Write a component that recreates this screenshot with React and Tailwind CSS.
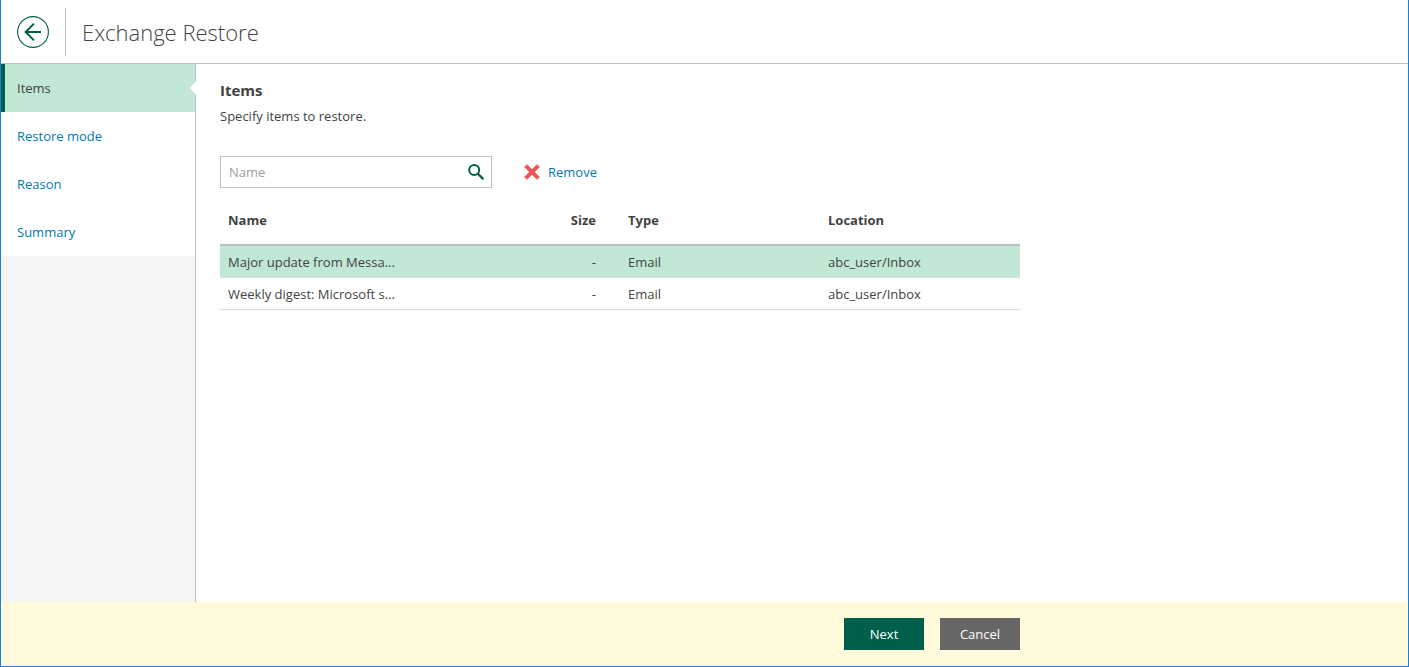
const steps = ["Items", "Restore mode", "Reason", "Summary"];

const rows = [
  { name: "Major update from Messa...", size: "-", type: "Email", location: "abc_user/Inbox", selected: true },
  { name: "Weekly digest: Microsoft s...", size: "-", type: "Email", location: "abc_user/Inbox", selected: false },
];

const Header = () => {
  return (
    <header className="flex h-16 items-center border-b border-[#bfbfbf] pl-4">
      <button type="button" aria-label="Back" className="h-8 w-8">
        <svg viewBox="0 0 32 32" className="h-8 w-8" fill="none" stroke="#005f4b">
          <circle cx="16" cy="16" r="15.4" strokeWidth="1.1" />
          <path d="M24 16H8.8M17 7.6L8.6 16l8.4 8.4" strokeWidth="2" />
        </svg>
      </button>
      <div className="ml-4 h-12 w-px bg-[#bfbfbf]" />
      <h1 className="ml-4 text-[22px] leading-8 font-light">Exchange Restore</h1>
    </header>
  );
};

const Sidebar = () => {
  return (
    <nav className="w-[195px] shrink-0 border-r border-[#bfbfbf] bg-[#f5f5f5]">
      <ul className="bg-white">
        {steps.map((step, i) =>
          i === 0 ? (
            <li key={step} className="relative flex h-12 items-center border-l-4 border-[#005f4b] bg-[#c0e8d5] pl-3">
              <a href="#items" aria-current="step">{step}</a>
              {/* notch pointing at the active step */}
              <svg viewBox="0 0 8 16" className="absolute top-4 -right-px h-4 w-2">
                <path d="M8 1L1 8l7 7z" fill="#fff" />
                <path d="M7.5 1L1 8l6.5 7" fill="none" stroke="#d3d3d3" />
              </svg>
            </li>
          ) : (
            <li key={step} className="flex h-12 items-center pl-4">
              <a href="#step" className="text-[#007ab3] hover:underline">{step}</a>
            </li>
          )
        )}
      </ul>
    </nav>
  );
};

const Toolbar = () => {
  return (
    <div className="mt-[30px] flex items-center gap-8">
      <div className="flex h-8 w-[272px] items-center border border-[#bfbfbf] pr-[7px] pl-2">
        <input
          type="text"
          aria-label="Name"
          placeholder="Name"
          className="min-w-0 flex-1 outline-none placeholder:text-[#a0a0a0]"
        />
        <button type="button" aria-label="Search">
          <svg viewBox="0 0 16 16" className="h-4 w-4" fill="none" stroke="#005f4b" strokeWidth="2">
            <circle cx="6.2" cy="6" r="5" />
            <path d="M9.8 9.6l5.6 5.6" strokeWidth="2.3" />
          </svg>
        </button>
      </div>
      <button type="button" className="flex items-center gap-2 text-[#007ab3]">
        <svg viewBox="0 0 16 16" className="h-4 w-4" fill="none" stroke="#eb5757" strokeWidth="4">
          <path d="M1.6 1.6l12.8 12.8M14.4 1.6L1.6 14.4" />
        </svg>
        Remove
      </button>
    </div>
  );
};

const ItemsTable = () => {
  return (
    <table className="mt-2 w-full table-fixed border-separate border-spacing-0 text-left">
      <thead>
        <tr className="h-[50px]">
          <th className="w-[180px] border-b-2 border-[#bfbfbf] px-2">Name</th>
          <th className="w-[204px] border-b-2 border-[#bfbfbf] px-2 text-right">Size</th>
          <th className="w-[216px] border-b-2 border-[#bfbfbf] pl-6">Type</th>
          <th className="border-b-2 border-[#bfbfbf] px-2">Location</th>
        </tr>
      </thead>
      <tbody>
        {rows.map((row) => (
          <tr key={row.name} className={row.selected ? "h-8 bg-[#c0e8d5]" : "h-8"}>
            <td className="border-b border-[#dedede] px-2 whitespace-nowrap">{row.name}</td>
            <td className="border-b border-[#dedede] px-2 text-right">{row.size}</td>
            <td className="border-b border-[#dedede] pl-6">{row.type}</td>
            <td className="border-b border-[#dedede] px-2">{row.location}</td>
          </tr>
        ))}
      </tbody>
    </table>
  );
};

const Footer = () => {
  return (
    <footer className="bg-[#fffadb]">
      <div className="flex h-16 max-w-[1019px] items-center justify-end gap-4 text-white">
        <button type="button" className="h-8 w-20 bg-[#005f4b]">Next</button>
        <button type="button" className="h-8 w-20 bg-[#666666]">Cancel</button>
      </div>
    </footer>
  );
};

export default function App() {
  return (
    <div className="flex min-h-screen flex-col border-x border-b border-[#1883d7] bg-white font-['Open_Sans',sans-serif] text-[13px] leading-5 text-[#434343]">
      <Header />
      <div className="flex flex-1">
        <Sidebar />
        <main className="min-w-0 flex-1 px-6 pt-[14px]">
          <div className="max-w-[800px]">
            <h2 className="text-[15px] leading-6 font-bold">Items</h2>
            <p className="mt-1">Specify items to restore.</p>
            <Toolbar />
            <ItemsTable />
          </div>
        </main>
      </div>
      <Footer />
    </div>
  );
}
